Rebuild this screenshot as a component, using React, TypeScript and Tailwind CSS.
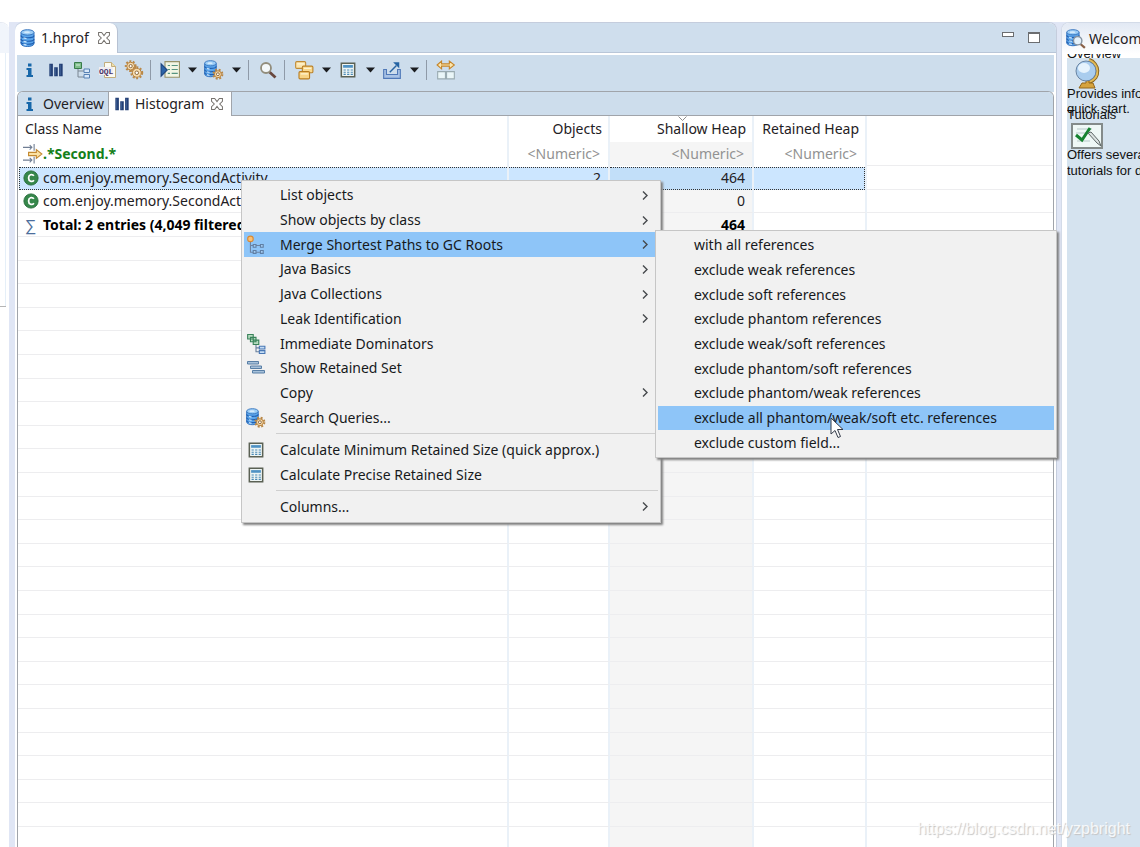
import type { ReactNode } from "react";

function Svg({ size = 18, children }: { size?: number; children: ReactNode }) {
    return (
        <svg width={size} height={size} viewBox="0 0 18 18" fill="none" className="shrink-0" aria-hidden="true">
            {children}
        </svg>
    );
}

function DatabaseShape() {
    return (
        <>
            <path d="M2 3.500v11c0 4 13 4 13 0v-11z" fill="#5ba6ec" stroke="#2f6fbd" />
            <path d="M2 6.500c0 3 13 3 13 0M2 10c0 3 13 3 13 0M2 13c0 3 13 3 13 0" stroke="#215fb0" strokeWidth="1.200" />
            <path d="M4.500 8.800l3 .8M4.500 12.300l3 .7M4.500 15.300l3 .7" stroke="#c4e2fc" strokeWidth="1.300" />
            <ellipse cx="8.500" cy="3.400" rx="6.500" ry="2.700" fill="#9ccdf6" stroke="#3a78c0" />
            <ellipse cx="8" cy="3.300" rx="3" ry="1" fill="#d3eafc" />
        </>
    );
}

function GearShape({ x, y, r }: { x: number; y: number; r: number }) {
    return (
        <>
            <circle cx={x} cy={y} r={r} stroke="#b98849" strokeWidth="2" strokeDasharray="1.700 1.400" />
            <circle cx={x} cy={y} r={r - 0.8} fill="#f7dcae" stroke="#b8833f" strokeWidth="0.900" />
            <circle cx={x} cy={y} r={r / 3} fill="#fff" stroke="#8f6a3c" strokeWidth="0.900" />
        </>
    );
}

const DatabaseIcon = () => <Svg><DatabaseShape /></Svg>;

const DatabaseGearIcon = () => (
    <Svg size={20}>
        <g transform="translate(-1 0) scale(0.8 0.86)"><DatabaseShape /></g>
        <GearShape x={12.5} y={12.8} r={3.9} />
    </Svg>
);

const DatabaseSearchIcon = () => (
    <Svg size={20}>
        <g transform="translate(-1 0) scale(0.85 0.86)"><DatabaseShape /></g>
        <path d="M13 13.500l4 3.500" stroke="#8a6148" strokeWidth="2" />
        <circle cx="10.500" cy="10.500" r="3.800" fill="#e4f1fb" stroke="#8693a1" strokeWidth="1.300" />
    </Svg>
);

const InfoIcon = () => (
    <Svg>
        <path d="M7 2.500h3.500v3H7zM5.500 7h5v7H12v2H5.500v-2H7V9H5.500z" fill="#1767a9" />
    </Svg>
);

const HistogramIcon = () => (
    <Svg size={16}>
        <path d="M1.500 2h4v14h-4zM7 6h4v10H7zM12.500 2h4v14h-4z" fill="#233f75" />
        <path d="M3 3v12M8.500 7v8M14 3v12" stroke="#3d5e94" />
    </Svg>
);

const TreeIcon = () => (
    <Svg>
        <path d="M5 8v8h6M5 10h6" stroke="#7a8793" />
        <path d="M1.500 1.500h7v6h-7z" fill="#7fbd8b" stroke="#397b4a" />
        <path d="M3 4h4" stroke="#d8efdc" />
        <path d="M11 8h5.500v3.500H11zM11 13.500h5.500V17H11z" fill="#d8e8fa" stroke="#5681b5" />
    </Svg>
);

const OqlIcon = () => (
    <Svg>
        <path d="M5.500 1.500h7l4 4v11h-11z" fill="#fbfaf0" stroke="#c2ad7c" />
        <path d="M12.500 1.500v4h4" fill="#f0dfa9" stroke="#c2ad7c" />
        <rect y="6" width="14" height="8" fill="#f0edf1" />
        <text x="0" y="13" fontSize="8" fontWeight="700" fill="#493568" className="font-['Liberation_Mono',monospace]">OQL</text>
    </Svg>
);

const GearsIcon = () => (
    <Svg size={20}>
        <GearShape x={6} y={5.5} r={4.3} />
        <GearShape x={11.5} y={11.5} r={4.8} />
    </Svg>
);

const RunReportIcon = () => (
    <Svg size={20}>
        <path d="M4.500 1.500h13v14h-13z" fill="#f1f5e4" stroke="#97926a" />
        <path d="M7 5h2M10.500 5h5.500M7 8.500h2M10.500 8.500h5.500M7 12h2M10.500 12h5.500" stroke="#569480" />
        <path d="M1 3.500l5.500 5.500-5.500 5.500z" fill="#2d65a8" stroke="#1c457f" />
    </Svg>
);

const SearchIcon = () => (
    <Svg>
        <path d="M10.500 11l6 5.500" stroke="#69473e" strokeWidth="2.800" />
        <circle cx="7" cy="7" r="5" fill="#f4f8fa" stroke="#928d7c" strokeWidth="1.800" />
    </Svg>
);

const FoldersIcon = () => (
    <Svg size={20}>
        <rect x="1.500" y="1.500" width="9" height="6" rx="1" fill="#fbe6b0" stroke="#c08a33" />
        <rect x="7.500" y="5.500" width="9.500" height="6" rx="1" fill="#f9d88d" stroke="#bb8128" />
        <rect x="4.500" y="10.500" width="9.500" height="6.500" rx="1" fill="#f8d486" stroke="#b87c20" />
        <path d="M3 3.500h6M9 7.500h6.500M6 12.500h6.500" stroke="#fff3cf" />
    </Svg>
);

const CalculatorIcon = () => (
    <Svg size={16}>
        <path d="M1.500 1.500h15v15h-15z" fill="#eef5f4" stroke="#5b6154" strokeWidth="1.700" />
        <path d="M3.500 3.500h11v3h-11z" fill="#4f92c4" />
        <path d="M4 9h2.500M8 9h2.500M12 9h2.500M4 11.500h2.500M8 11.500h2.500M12 11.500h2.500M4 14h2.500M8 14h2.500M12 14h2.500" stroke="#4a89b5" strokeWidth="1.300" />
    </Svg>
);

const ExportIcon = () => (
    <Svg size={20}>
        <path d="M4 8.500H1.500v8h15v-8H14V13H4z" fill="#a9c3e6" stroke="#5079b8" />
        <path d="M7 11l6-6" stroke="#2a65a2" strokeWidth="1.300" />
        <path d="M10 2h5.500v5.500z" fill="#2463a3" />
    </Svg>
);

const CompareIcon = () => (
    <Svg size={20}>
        <path d="M1 4.500l4-3.500v2.500h7V1l4.500 3.500L12 8V5.500H5V8z" fill="#fce6ad" stroke="#c5852b" />
        <path d="M1.500 10.500h7v6.500h-7zM9.500 10.500h7v6.500h-7z" fill="#eaf6f8" stroke="#9aabb1" />
    </Svg>
);

const FilterIcon = () => (
    <Svg size={20}>
        <path d="M0 3h8M6 1l2 2-2 2M10 0v6M0 14.500h8M6 12.500l2 2-2 2M10 11.500v6" stroke="#707e94" />
        <path d="M5 7.500h7V5l5 4-5 4v-2.500H5z" fill="#fbe2a5" stroke="#c48a32" />
    </Svg>
);

const ClassIcon = () => (
    <Svg size={16}>
        <circle cx="9" cy="9" r="8" fill="#36874b" stroke="#236b37" />
        <path d="M12.300 6.500c-2.200-2.500-6-1.300-6 2.500s3.800 5 6 2.500" stroke="#fff" strokeWidth="2" />
    </Svg>
);

const MergePathsIcon = () => (
    <Svg size={20}>
        <path d="M4 5v10.500h10M4 9.500h10" stroke="#6c83a3" />
        <path d="M6.500 8.500h2.500v2.500H6.500zM13 8.500h2.500v2.500H13zM6.500 14h2.500v2.500H6.500zM13 14h2.500v2.500H13z" fill="#a5cdf2" stroke="#5f7fa5" />
        <circle cx="4" cy="3.500" r="2.500" fill="#fbc073" stroke="#d98a35" />
    </Svg>
);

const DominatorsIcon = () => (
    <Svg size={20}>
        <path d="M1.500.5h5v4h-5zM4 3h5v4H4zM6.500 5.500h5v4h-5z" fill="#b7ddc0" stroke="#39825a" />
        <path d="M9 10v6h3M9 12.500h3" stroke="#69809d" />
        <path d="M12 11h5v2.500h-5zM12 15h5v2.500h-5z" fill="#c4dcf5" stroke="#4877b4" />
    </Svg>
);

const RetainedSetIcon = () => (
    <Svg>
        <path d="M.5 2.500h11v2.500H.5zM3.500 7h11v2.500h-11zM5.500 11.500h12V14h-12z" fill="#a7c1da" stroke="#587fa6" />
    </Svg>
);

const CloseIcon = () => (
    <Svg size={14}>
        <path d="M2 2h4l3 4 3-4h4v3.500L12.500 9l3.500 3.500V16h-4l-3-4-3 4H2v-3.500L5.500 9 2 5.500z" fill="#fff" stroke="#77736f" strokeWidth="1.300" />
    </Svg>
);

const GlobeIcon = () => (
    <svg width="28" height="32" viewBox="0 0 28 32" fill="none" className="shrink-0" aria-hidden="true">
        <path d="M16 2c10 3 12 18 0 22" stroke="#8a651d" strokeWidth="4" />
        <path d="M16 2c10 3 12 18 0 22" stroke="#e1b955" strokeWidth="2" />
        <path d="M9 25h4v-3h3v3h4l2 5H6z" fill="#d6a33d" stroke="#94661b" />
        <circle cx="13" cy="13" r="10" fill="#aacdee" stroke="#6883a2" />
        <ellipse cx="11" cy="10" rx="6" ry="5" fill="#e6f3fd" />
    </svg>
);

const TutorialsIcon = () => (
    <svg width="32" height="26" viewBox="0 0 32 26" fill="none" className="shrink-0" aria-hidden="true">
        <path d="M1 1h30v24H1z" fill="#eff8f6" stroke="#848b8a" strokeWidth="2" />
        <path d="M6 6h15M5 10h10M6 18h13" stroke="#b7c9c8" />
        <path d="M5 12l6 5 8-12" stroke="#178331" strokeWidth="3" />
        <path d="M17 10l9 10 4 3-2-5-8-9z" fill="#dce3e2" stroke="#5d6665" />
    </svg>
);

const DropArrow = ({ label }: { label: string }) => (
    <button aria-label={label} className="flex w-[18px] items-center justify-center">
        <svg width="9" height="6" viewBox="0 0 9 6" aria-hidden="true"><path d="M0 .5h9L4.500 5.500z" fill="#1b1d20" /></svg>
    </button>
);

const Divider = () => <span className="mr-1.5 ml-[3px] h-5 w-px shrink-0 bg-[#8f9aa8]" />;

interface Tool {
    label: string;
    icon: ReactNode;
    drop?: boolean;
    divider?: boolean;
}

const tools: Tool[] = [
    { label: "Overview", icon: <InfoIcon /> },
    { label: "Histogram", icon: <HistogramIcon /> },
    { label: "Dominator tree", icon: <TreeIcon /> },
    { label: "Object query", icon: <OqlIcon /> },
    { label: "Thread overview", icon: <GearsIcon />, divider: true },
    { label: "Run report", icon: <RunReportIcon />, drop: true },
    { label: "Query browser", icon: <DatabaseGearIcon />, drop: true, divider: true },
    { label: "Find", icon: <SearchIcon />, divider: true },
    { label: "Group result", icon: <FoldersIcon />, drop: true },
    { label: "Calculate retained size", icon: <CalculatorIcon />, drop: true },
    { label: "Export", icon: <ExportIcon />, drop: true, divider: true },
    { label: "Compare", icon: <CompareIcon /> },
];

function Toolbar() {
    return (
        <div role="toolbar" className="flex h-[37px] shrink-0 bg-[#cdddec] pb-2">
            {tools.map((tool) => (
                <div key={tool.label} className="flex items-center">
                    <button aria-label={tool.label} className="flex w-[26px] items-center justify-center">{tool.icon}</button>
                    {tool.drop && <DropArrow label={`${tool.label} options`} />}
                    {tool.divider && <Divider />}
                </div>
            ))}
        </div>
    );
}

interface Item {
    label: string;
    icon?: ReactNode;
    sub?: boolean;
    active?: boolean;
}

const mainItems: Item[] = [
    { label: "List objects", sub: true },
    { label: "Show objects by class", sub: true },
    { label: "Merge Shortest Paths to GC Roots", icon: <MergePathsIcon />, sub: true, active: true },
    { label: "Java Basics", sub: true },
    { label: "Java Collections", sub: true },
    { label: "Leak Identification", sub: true },
    { label: "Immediate Dominators", icon: <DominatorsIcon /> },
    { label: "Show Retained Set", icon: <RetainedSetIcon /> },
    { label: "Copy", sub: true },
    { label: "Search Queries...", icon: <DatabaseGearIcon /> },
];

const calcItems: Item[] = [
    { label: "Calculate Minimum Retained Size (quick approx.)", icon: <CalculatorIcon /> },
    { label: "Calculate Precise Retained Size", icon: <CalculatorIcon /> },
];

const pathItems: Item[] = [
    { label: "with all references" },
    { label: "exclude weak references" },
    { label: "exclude soft references" },
    { label: "exclude phantom references" },
    { label: "exclude weak/soft references" },
    { label: "exclude phantom/soft references" },
    { label: "exclude phantom/weak references" },
    { label: "exclude all phantom/weak/soft etc. references", active: true },
    { label: "exclude custom field..." },
];

function MenuItem({ label, icon, sub, active }: Item) {
    return (
        <button role="menuitem" className={`flex w-full items-center text-left whitespace-nowrap ${active ? "bg-[#8ec5f8]" : ""}`}>
            <span className="flex w-6 shrink-0 justify-center">{icon}</span>
            <span className="ml-3 flex-1">{label}</span>
            {sub && (
                <svg width="6" height="9" viewBox="0 0 6 9" fill="none" className="mr-2.5" aria-hidden="true">
                    <path d="M1 .5l4 4-4 4" stroke="#45484c" strokeWidth="1.400" />
                </svg>
            )}
        </button>
    );
}

const MenuDivider = () => <hr className="my-[3px] ml-8 border-[#cfcfcf]" />;

const menuBox = "absolute border border-[#c6c6c6] bg-[#f1f1f1] shadow-[2px_2px_2px_#808080] text-[#17191c]";

function ContextMenu() {
    return (
        <div role="menu" className={`${menuBox} top-[180px] left-[241px] w-[420px] px-0.5 pt-0.5 pb-[3px]`}>
            <div className="grid h-[247px] auto-rows-fr">
                {mainItems.map((item) => <MenuItem key={item.label} {...item} />)}
            </div>
            <MenuDivider />
            <div className="grid h-[50px] auto-rows-fr">
                {calcItems.map((item) => <MenuItem key={item.label} {...item} />)}
            </div>
            <MenuDivider />
            <div className="grid h-[25px]">
                <MenuItem label="Columns..." sub />
            </div>
        </div>
    );
}

function PathsMenu() {
    return (
        <div role="menu" className={`${menuBox} top-[230px] left-[655px] w-[402px] p-0.5`}>
            <div className="grid h-[222px] auto-rows-fr">
                {pathItems.map((item) => <MenuItem key={item.label} {...item} />)}
            </div>
        </div>
    );
}

// Row heights repeat in a five-row rhythm
const rowHeights = ["h-6", "h-[23px]", "h-6", "h-6", "h-[23px]"];

const cell = "border-r-2 border-[#eaf1f8] p-0";
const line = "border-b border-b-[#ededef]";

function HistogramTable() {
    return (
        <table className="w-full table-fixed border-separate border-spacing-0">
            <colgroup>
                <col className="w-[491px]" />
                <col className="w-[101px]" />
                <col className="w-[144px]" />
                <col className="w-[113px]" />
                <col />
            </colgroup>
            <thead>
                <tr className="h-[26px]">
                    <th className={`${cell} pl-[7px] text-left font-normal`}>Class Name</th>
                    <th className={`${cell} pr-1.5 text-right font-normal`}>Objects</th>
                    <th className={`${cell} relative pr-1.5 text-right font-normal`}>
                        <svg width="9" height="5" viewBox="0 0 9 5" fill="none" className="absolute top-0 left-[68px]" aria-hidden="true">
                            <path d="M.5.5l4 4 4-4" stroke="#8d8d8d" />
                        </svg>
                        Shallow Heap
                    </th>
                    <th className={`${cell} pr-1.5 text-right font-normal`}>Retained Heap</th>
                    <th className="p-0" />
                </tr>
            </thead>
            <tbody>
                <tr className="h-6 text-[#929292]">
                    <td className={`${cell} font-bold text-[#14801a]`}>
                        <div className="flex items-center pl-[5px]"><FilterIcon />.*Second.*</div>
                    </td>
                    <td className={`${cell} pr-2 text-right`}>&lt;Numeric&gt;</td>
                    <td className={`${cell} bg-[#f5f5f5] pr-2 text-right`}>&lt;Numeric&gt;</td>
                    <td className={`${cell} pr-2 text-right`}>&lt;Numeric&gt;</td>
                    <td className={`p-0 ${line}`} />
                </tr>
                <tr className="h-6">
                    <td className={cell}>
                        <div className="ml-px flex h-[23px] items-center gap-1 border border-r-0 border-dotted border-[#333] bg-[#cce6ff] pl-[3px]"><ClassIcon />com.enjoy.memory.SecondActivity</div>
                    </td>
                    <td className={cell}><div className="h-[23px] border-y border-dotted border-[#333] bg-[#cce6ff] pr-[7px] text-right">2</div></td>
                    <td className={cell}><div className="h-[23px] border-y border-dotted border-[#333] bg-[#c2dff9] pr-[7px] text-right">464</div></td>
                    <td className={cell}><div className="h-[23px] border border-l-0 border-dotted border-[#333] bg-[#cce6ff]" /></td>
                    <td className={`p-0 ${line}`} />
                </tr>
                <tr className="h-[23px]">
                    <td className={`${cell} ${line}`}>
                        <div className="flex items-center gap-1 pl-[5px]"><ClassIcon />com.enjoy.memory.SecondActivity</div>
                    </td>
                    <td className={`${cell} ${line} pr-[7px] text-right`}>0</td>
                    <td className={`${cell} ${line} bg-[#f5f5f5] pr-[7px] text-right`}>0</td>
                    <td className={`${cell} ${line}`} />
                    <td className={`p-0 ${line}`} />
                </tr>
                <tr className="h-6 font-bold text-black">
                    <td className={`${cell} ${line}`}>
                        <div className="flex items-center pl-[7px]">
                            <span className="w-[18px] text-base leading-5 font-normal text-[#4c6e9c]">∑</span>
                            Total: 2 entries (4,049 filtered)
                        </div>
                    </td>
                    <td className={`${cell} ${line} pr-[7px] text-right`}>2</td>
                    <td className={`${cell} ${line} bg-[#f5f5f5] pr-[7px] text-right`}>464</td>
                    <td className={`${cell} ${line}`} />
                    <td className={`p-0 ${line}`} />
                </tr>
                {Array.from({ length: 27 }).map((_, i) => (
                    <tr key={i} className={rowHeights[(i + 3) % 5]}>
                        <td className={`${cell} ${line}`} />
                        <td className={`${cell} ${line}`} />
                        <td className={`${cell} ${line} bg-[#f5f5f5]`} />
                        <td className={`${cell} ${line}`} />
                        <td className={`p-0 ${line}`} />
                    </tr>
                ))}
            </tbody>
        </table>
    );
}

function Editor() {
    return (
        <main className="flex min-w-0 flex-1 flex-col overflow-hidden rounded-t-lg border-t border-r border-[#c5cddd] bg-white">
            {/* File tab and window buttons */}
            <div className="flex h-[30px] shrink-0 items-center border-b border-[#b9c6d8] bg-[#cfdeed]">
                <div className="flex h-[30px] w-[103px] items-center rounded-t-lg border-r border-[#b7c2d3] bg-white pl-1">
                    <DatabaseIcon />
                    <span className="mr-2 ml-1">1.hprof</span>
                    <button aria-label="Close 1.hprof"><CloseIcon /></button>
                </div>
                <button aria-label="Minimize" className="mr-3.5 mb-1.5 ml-auto h-[5px] w-3 border border-[#6b6d70] bg-white" />
                <button aria-label="Maximize" className="mr-4 h-[11px] w-3 border border-t-2 border-[#6b6d70] bg-white" />
            </div>

            <div className="flex min-h-0 flex-1 flex-col border-x-2 border-t-2 border-white">
                <Toolbar />
                <div className="-mt-px flex min-h-0 flex-1 flex-col overflow-hidden rounded-t-md border-x border-t border-[#a0a4aa]">
                    {/* Inner tabs */}
                    <div className="flex h-6 shrink-0 border-b border-[#a0a4aa] bg-[#cdddec]">
                        <button className="flex w-[91px] items-center gap-1 border-r border-[#a0a4aa] pl-[3px]">
                            <InfoIcon />Overview
                        </button>
                        <div className="flex h-6 w-[123px] items-center border-r border-[#a0a4aa] bg-white pl-[5px]">
                            <HistogramIcon />
                            <span className="mr-1.5 ml-[5px]">Histogram</span>
                            <button aria-label="Close Histogram"><CloseIcon /></button>
                        </div>
                    </div>
                    <div className="min-h-0 flex-1 overflow-hidden"><HistogramTable /></div>
                </div>
            </div>
        </main>
    );
}

function WelcomePanel() {
    return (
        <aside className="ml-1 flex w-[79px] shrink-0 flex-col overflow-hidden rounded-tl-lg border-t border-l border-[#d3dbe8] bg-white whitespace-nowrap">
            <div className="flex h-[31px] shrink-0 items-center bg-linear-to-b from-[#e2e9f4] to-white pl-1">
                <DatabaseSearchIcon />
                <span className="ml-[3px]">Welcome</span>
            </div>
            <div className="ml-[5px] flex-1 overflow-hidden bg-[#d5e3ef] font-['Liberation_Sans',Arial,sans-serif] text-[13px] leading-4 text-[#111]">
                <div className="-mt-2 h-3 bg-white leading-4">Overview</div>
                <div className="ml-1.5 h-7"><GlobeIcon /></div>
                <p>Provides info</p>
                <p className="-mt-px">quick start.</p>
                <p className="-mt-2.5">Tutorials</p>
                <div className="ml-1 h-6"><TutorialsIcon /></div>
                <p>Offers several</p>
                <p>tutorials for d</p>
            </div>
        </aside>
    );
}

export default function App() {
    return (
        <div className="relative flex h-screen overflow-hidden bg-white pt-[22px] font-['Noto_Sans','Segoe_UI',sans-serif] text-sm leading-5 text-[#1f2124]">
            {/* Neighbouring view on the left */}
            <div className="flex w-[9px] shrink-0 flex-col rounded-tr-lg border-t border-[#e4e9f1]">
                <div className="h-[30px] rounded-tr-lg bg-[#f1f5fb]" />
                <div className="mr-[3px] h-[253px] border-r border-[#e5eff8]" />
                <div className="mr-[3px] h-px bg-[#b5b5b5]" />
            </div>
            <div className="flex min-w-0 flex-1 bg-[#e0e6f5] pl-1.5">
                <Editor />
                <WelcomePanel />
            </div>

            <ContextMenu />
            <PathsMenu />

            <svg width="14" height="22" viewBox="0 0 14 22" className="absolute top-[417px] left-[830px]" aria-hidden="true">
                <path d="M1 1v16l4-3.500 3 7 2.500-1-3-7H13z" fill="#fff" stroke="#333a48" />
            </svg>
            <div className="absolute right-2.5 bottom-2 font-['Liberation_Sans',Arial,sans-serif] text-base leading-5 text-white/80 [text-shadow:1px_1px_1px_#c4c4c4]">
                https://blog.csdn.net/yzpbright
            </div>
        </div>
    );
}
